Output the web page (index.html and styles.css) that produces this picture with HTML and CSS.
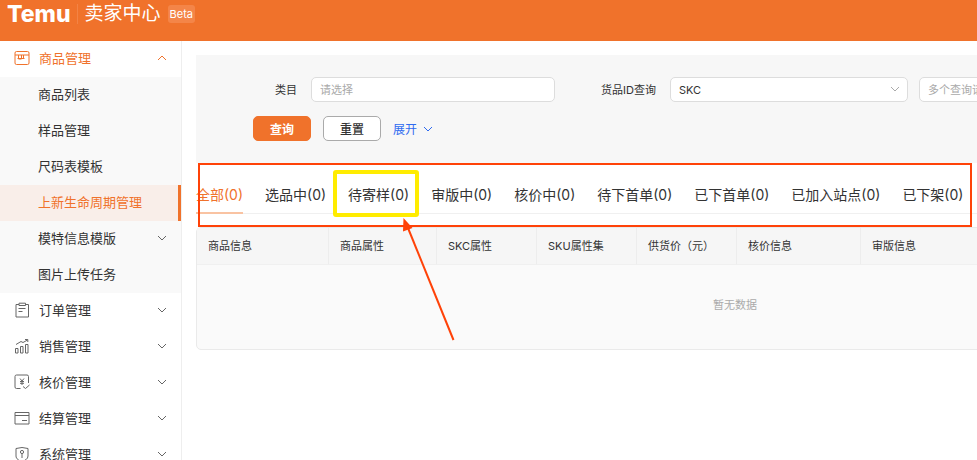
FILE: index.html
```html
<!DOCTYPE html>
<html lang="zh-CN">
<head>
    <meta charset="UTF-8">
    <meta name="viewport" content="width=device-width, initial-scale=1.0">
    <title>Temu 卖家中心</title>
    <link rel="stylesheet" href="styles.css">
</head>
<body>

    <!-- Shared chevron -->
    <svg class="defs" width="0" height="0">
        <symbol id="down" viewBox="0 0 10 6"><path d="M1 1l4 4 4-4"/></symbol>
    </svg>

    <header class="topbar">
        <span class="logo">Temu</span>
        <span class="title">卖家中心</span>
        <span class="beta">Beta</span>
    </header>

    <div class="layout">

        <!-- Sidebar -->
        <nav class="sidebar">
            <a href="#" class="item open">
                <svg class="icon" viewBox="0 0 16 16"><rect x="1" y="1.500" width="14" height="13" rx="1.500"/><path d="M1 5h14M4.500 5v4h3V5M9.500 5v4M3.500 8.500h7"/></svg>
                <span>商品管理</span>
                <svg class="arrow up"><use href="#down"/></svg>
            </a>
            <div class="submenu">
                <a href="#" class="item sub"><span>商品列表</span></a>
                <a href="#" class="item sub"><span>样品管理</span></a>
                <a href="#" class="item sub"><span>尺码表模板</span></a>
                <a href="#" class="item sub active"><span>上新生命周期管理</span></a>
                <a href="#" class="item sub"><span>模特信息模版</span><svg class="arrow"><use href="#down"/></svg></a>
                <a href="#" class="item sub"><span>图片上传任务</span></a>
            </div>
            <a href="#" class="item">
                <svg class="icon" viewBox="0 0 16 16"><path d="M5 2.500H2v12.500h12.500V2.500h-3M5 1.200h6.500v2.300H5zM4.500 6.500h7M4.500 9.500h4"/></svg>
                <span>订单管理</span>
                <svg class="arrow"><use href="#down"/></svg>
            </a>
            <a href="#" class="item">
                <svg class="icon" viewBox="0 0 16 16"><path d="M1.500 10.500h2.500v4.500h-2.500zM6.500 8.500h2.500V15h-2.500zM11.500 6.500h2.500V15h-2.500zM2 6.500l5-3 2 1L13.500 2M11 1.500h2.800v2.500"/></svg>
                <span>销售管理</span>
                <svg class="arrow"><use href="#down"/></svg>
            </a>
            <a href="#" class="item">
                <svg class="icon" viewBox="0 0 16 16"><path d="M6.500 14.500H2.500a1.500 1.500 0 0 1-1.500-1.500V2.500A1.500 1.500 0 0 1 2.500 1H13a1.500 1.500 0 0 1 1.500 1.500V9M9 12.500l2.500 2 4-3.500M6 4.500l2 2.500 2-2.500M8 7v4M6 7.500h4M6 9.300h4"/></svg>
                <span>核价管理</span>
                <svg class="arrow"><use href="#down"/></svg>
            </a>
            <a href="#" class="item">
                <svg class="icon" viewBox="0 0 16 16"><path d="M1 2.500h14v11.500H1zM1 5.500h14M8 10.500h5"/></svg>
                <span>结算管理</span>
                <svg class="arrow"><use href="#down"/></svg>
            </a>
            <a href="#" class="item">
                <svg class="icon" viewBox="0 0 16 16"><path d="M2 2.500l6-1 6 1V10c0 3-3 4.500-6 5.500C5 14.500 2 13 2 10zM8 7.500V12"/><circle cx="8" cy="6" r="1.600"/></svg>
                <span>系统管理</span>
                <svg class="arrow"><use href="#down"/></svg>
            </a>
        </nav>

        <main class="main">
            <div class="content">

                <!-- Filters -->
                <form class="filters">
                    <div class="fields">
                        <label for="category">类目</label>
                        <input class="category" type="text" id="category" placeholder="请选择">
                        <label for="idType">货品ID查询</label>
                        <div class="select">
                            <select id="idType">
                                <option>SKC</option>
                                <option>SKU</option>
                            </select>
                            <svg class="arrow"><use href="#down"/></svg>
                        </div>
                        <input class="ids" type="text" aria-label="货品ID" placeholder="多个查询请空格或逗号依次输入">
                    </div>
                    <div class="actions">
                        <button type="button" class="primary">查询</button>
                        <button type="button">重置</button>
                        <a href="#" class="expand">展开<svg class="arrow"><use href="#down"/></svg></a>
                    </div>
                </form>

                <!-- Status tabs -->
                <div class="tabs">
                    <a href="#" class="tab current">全部(0)</a>
                    <a href="#" class="tab">选品中(0)</a>
                    <a href="#" class="tab">待寄样(0)</a>
                    <a href="#" class="tab">审版中(0)</a>
                    <a href="#" class="tab">核价中(0)</a>
                    <a href="#" class="tab">待下首单(0)</a>
                    <a href="#" class="tab">已下首单(0)</a>
                    <a href="#" class="tab">已加入站点(0)</a>
                    <a href="#" class="tab">已下架(0)</a>
                </div>

                <table>
                    <colgroup>
                        <col class="wide"><col class="medium"><col class="narrow"><col class="narrow"><col class="narrow"><col class="price"><col>
                    </colgroup>
                    <thead>
                        <tr>
                            <th>商品信息</th>
                            <th>商品属性</th>
                            <th>SKC属性</th>
                            <th>SKU属性集</th>
                            <th>供货价（元）</th>
                            <th>核价信息</th>
                            <th>审版信息</th>
                        </tr>
                    </thead>
                    <tbody>
                        <tr><td colspan="7">暂无数据</td></tr>
                    </tbody>
                </table>

                <!-- Marks drawn over the tabs -->
                <svg class="marks" width="790" height="300" viewBox="0 0 790 300">
                    <rect x="3" y="109" width="772" height="62" fill="none" stroke="#ff4208" stroke-width="2"/>
                    <rect x="139" y="117" width="82" height="43" rx="1" fill="none" stroke="#ffec00" stroke-width="4"/>
                    <path d="M257.500 285L212 173" stroke="#ff4208" stroke-width="2"/>
                    <path d="M207.500 163l9 10-9.500 3.500z" fill="#ff4208"/>
                </svg>
            </div>
        </main>
    </div>

</body>
</html>
```
FILE: styles.css
```css
* {
    box-sizing: border-box;
}

body {
    margin: 0;
    height: 100vh;
    display: flex;
    flex-direction: column;
    overflow: hidden;
    background: #fff;
    color: #333;
    font-family: Inter, "Noto Sans CJK SC", sans-serif;
    font-size: 13px;
}

a {
    color: inherit;
    text-decoration: none;
}

svg {
    fill: none;
    stroke: currentColor;
}

.defs {
    position: absolute;
}

.arrow {
    width: 10px;
    height: 6px;
    flex: none;
}

/* Top bar */
.topbar {
    flex: none;
    display: flex;
    align-items: center;
    height: 41px;
    padding: 0 7px 13px;
    background: #f0722b;
    color: #fff;
}

.logo {
    font-size: 23px;
    font-weight: 800;
    line-height: 28px;
}

.title {
    margin-left: 6px;
    padding-left: 7px;
    border-left: 1px solid #f38345;
    font-size: 19px;
    line-height: 20px;
}

.beta {
    margin-left: 7px;
    padding: 0 2px;
    border-radius: 3px;
    background: #f48548;
    font-size: 11px;
    line-height: 18px;
}

.layout {
    flex: 1;
    display: flex;
    min-height: 0;
}

/* Sidebar */
.sidebar {
    flex: none;
    width: 182px;
    border-right: 1px solid #eee;
    overflow: hidden;
}

.item {
    display: flex;
    align-items: center;
    height: 36px;
    padding: 0 14px 3px;
    line-height: 18px;
}

.item .icon {
    width: 16px;
    height: 16px;
    margin-right: 9px;
    color: #666;
}

.item .arrow {
    margin-left: auto;
    color: #666;
}

.item.open,
.item.open .icon,
.item.open .arrow {
    color: #f0722b;
}

.up {
    transform: rotate(180deg);
}

.submenu {
    background: #f9f9f9;
}

.item.sub {
    padding-left: 38px;
}

.item.active {
    background: #f9eee9;
    border-right: 3px solid #f0722b;
    color: #f0722b;
}

/* Content */
.main {
    flex: 1;
    min-width: 0;
    padding: 14px 0 0 14px;
    overflow: hidden;
}

.content {
    position: relative;
    min-width: 1078px;
}

.filters {
    height: 108px;
    padding-top: 22px;
    background: #f7f7f7;
    font-size: 11px;
}

.fields,
.actions {
    display: flex;
    align-items: center;
}

.fields label {
    width: 101px;
    margin-right: 14px;
    padding-bottom: 2px;
    text-align: right;
}

.fields input,
.fields select {
    height: 25px;
    padding: 0 8px;
    border: 1px solid #ddd;
    border-radius: 5px;
    background: #fff;
    color: #333;
    font-family: inherit;
    font-size: 11px;
}

.fields input::placeholder {
    color: #aaa;
}

.fields .category {
    width: 244px;
}

.select {
    position: relative;
    width: 238px;
    margin-right: 11px;
}

.select select {
    width: 100%;
    appearance: none;
}

.select .arrow {
    position: absolute;
    right: 8px;
    top: 9px;
    color: #aaa;
    pointer-events: none;
}

.fields .ids {
    flex: 1;
}

.actions {
    gap: 12px;
    margin-top: 14px;
    padding-left: 57px;
}

.actions button {
    width: 58px;
    height: 25px;
    padding: 0;
    border: 1px solid #aaa;
    border-radius: 5px;
    background: #fff;
    color: #333;
    font-family: inherit;
    font-size: 12px;
    font-weight: 500;
}

.actions .primary {
    border-color: #f0722b;
    background: #f0722b;
    color: #fff;
    font-weight: 700;
}

.expand {
    display: flex;
    align-items: center;
    gap: 6px;
    color: #2f6bf0;
    font-size: 12px;
}

/* Tabs */
.tabs {
    display: flex;
    gap: 22px;
    height: 51px;
    margin-bottom: 13px;
    border-bottom: 1px solid #f0f0f0;
    font-size: 14px;
}

.tab {
    height: 51px;
    padding-top: 12px;
    line-height: 40px;
    white-space: nowrap;
}

.tab.current {
    border-bottom: 2px solid #f9c3a2;
    color: #f0722b;
}

/* Table */
table {
    width: 100%;
    table-layout: fixed;
    border: 1px solid #eaeaea;
    border-radius: 5px;
    border-spacing: 0;
    background: #fafafa;
    font-size: 11px;
}

.wide {
    width: 132px;
}

.medium {
    width: 108px;
}

.narrow {
    width: 100px;
}

.price {
    width: 124px;
}

th {
    height: 37px;
    padding: 0 11px 2px;
    border-right: 1px solid #ededed;
    border-bottom: 1px solid #f0f0f0;
    background: #f6f6f6;
    font-weight: 400;
    text-align: left;
}

td {
    height: 84px;
    padding: 0 0 6px;
    color: #aaa;
    text-align: center;
}

/* Overlay */
.marks {
    position: absolute;
    left: 0;
    top: 0;
    pointer-events: none;
    stroke: none;
}
```
